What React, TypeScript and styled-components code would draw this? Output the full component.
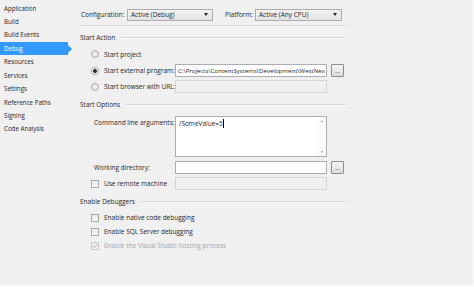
import React from "react";
import styled, { createGlobalStyle } from "styled-components";

const Global = createGlobalStyle`
  html, body { margin: 0; padding: 0; background: #f0f0f0; }
  body { font-family: "Open Sans", "Noto Sans", sans-serif; font-size: 6.5px; color: #1e1e1e; }
  * { box-sizing: border-box; }
`;

const Page = styled.div`
  width: 474px;
  height: 287px;
  display: flex;
  background: #f0f0f0;
  border-right: 1px solid #fafafa;
  border-bottom: 2px solid #fafafa;
  overflow: hidden;
`;

const Sidebar = styled.nav`
  width: 72px;
  flex: none;
  display: flex;
  flex-direction: column;
  padding-top: 1.5px;
  font-size: 6.2px;
`;

const NavItem = styled.div<{ $active?: boolean }>`
  position: relative;
  height: 13.45px;
  line-height: 13.45px;
  padding-left: 4px;
  width: 68px;
  color: ${(p) => (p.$active ? "#ffffff" : "#1e1e1e")};
  background: ${(p) => (p.$active ? "#3399ff" : "transparent")};
  &::after {
    content: "";
    display: ${(p) => (p.$active ? "block" : "none")};
    position: absolute;
    right: -4px;
    top: 2.7px;
    border-left: 4px solid #3399ff;
    border-top: 4px solid transparent;
    border-bottom: 4px solid transparent;
  }
`;

const Main = styled.div`
  flex: none;
  width: 266px;
  margin-left: 8px;
  display: flex;
  flex-direction: column;
`;

const ConfigRow = styled.div`
  display: flex;
  align-items: center;
  height: 22px;
  margin-top: 4px;
  padding-left: 1px;
  border-bottom: 1px solid #d5d5d5;
  box-shadow: 0 1px 0 #fafafa;
`;

const Label = styled.span<{ $w?: number }>`
  display: inline-block;
  width: ${(p) => (p.$w ? `${p.$w}px` : "auto")};
  white-space: nowrap;
`;

const Select = styled.div<{ $w: number }>`
  width: ${(p) => p.$w}px;
  height: 12px;
  border: 1px solid #acacac;
  background: linear-gradient(#f2f2f2, #e4e4e4);
  display: flex;
  align-items: center;
  justify-content: space-between;
  padding: 0 4px 0 3px;
  &::after {
    content: "";
    border-top: 3px solid #222;
    border-left: 2.5px solid transparent;
    border-right: 2.5px solid transparent;
  }
`;

const GroupHeader = styled.div<{ $mt: number }>`
  display: flex;
  align-items: center;
  gap: 6px;
  margin-top: ${(p) => p.$mt}px;
  height: 11px;
  &::after {
    content: "";
    flex: 1;
    height: 1px;
    background: #d5d5d5;
    box-shadow: 0 1px 0 #fafafa;
  }
`;

const Row = styled.div<{ $mt: number }>`
  display: grid;
  grid-template-columns: 84px 152px 17px;
  align-items: center;
  margin-left: 11px;
  margin-top: ${(p) => p.$mt}px;
  min-height: 12px;
`;

const CheckLabel = styled.label`
  display: flex;
  align-items: center;
  gap: 5px;
  white-space: nowrap;
`;

const Radio = styled.span<{ $on?: boolean }>`
  width: 8px;
  height: 8px;
  border-radius: 50%;
  border: 1px solid #a9a9a9;
  background: radial-gradient(circle, ${(p) => (p.$on ? "#333 0 1.6px, #e8e8e8 2px" : "#f4f4f4 0, #dcdcdc 100%")});
  flex: none;
`;

const Box = styled.span<{ $disabled?: boolean }>`
  width: 8px;
  height: 8px;
  border: 1px solid ${(p) => (p.$disabled ? "#c8c8c8" : "#a9a9a9")};
  background: linear-gradient(#ececec, #f6f6f6);
  flex: none;
  display: flex;
  align-items: center;
  justify-content: center;
  svg { display: block; }
`;

const Field = styled.div<{ $disabled?: boolean }>`
  height: 13px;
  border: 1px solid ${(p) => (p.$disabled ? "#d4d4d4" : "#abadb3")};
  background: ${(p) => (p.$disabled ? "#f0f0f0" : "#ffffff")};
  padding: 0 2px;
  line-height: 11px;
  white-space: nowrap;
  overflow: hidden;
  font-size: 6.1px;
`;

const Area = styled.div`
  position: relative;
  height: 41px;
  border: 1px solid #abadb3;
  background: #ffffff;
  padding: 2px 3px;
  align-self: start;
`;

const Scroll = styled.div`
  position: absolute;
  right: 0;
  top: 0;
  bottom: 0;
  width: 9px;
  display: flex;
  flex-direction: column;
  justify-content: space-between;
  align-items: center;
  padding: 3px 0;
  background: #fafafa;
  span {
    border-left: 1.5px solid transparent;
    border-right: 1.5px solid transparent;
  }
  span:first-child { border-bottom: 2px solid #999; }
  span:last-child { border-top: 2px solid #999; }
`;

const Caret = styled.span`
  border-right: 1px solid #000;
`;

const Browse = styled.div`
  justify-self: end;
  width: 13px;
  height: 13px;
  border: 1px solid #8c8c8c;
  border-radius: 1px;
  background: linear-gradient(#f4f4f4, #dcdcdc);
  display: flex;
  align-items: flex-end;
  justify-content: center;
  padding-bottom: 2px;
  font-size: 6px;
  line-height: 6px;
`;

const Indent = styled.div<{ $mt: number; $disabled?: boolean }>`
  margin-left: 11px;
  margin-top: ${(p) => p.$mt}px;
  color: ${(p) => (p.$disabled ? "#a6a6a6" : "inherit")};
`;

const Check = () => (
  <svg width="6" height="6" viewBox="0 0 6 6">
    <path d="M0.8 3 L2.4 4.6 L5.2 1.2" fill="none" stroke="#b0b0b0" strokeWidth="1" />
  </svg>
);

const nav = [
  "Application",
  "Build",
  "Build Events",
  "Debug",
  "Resources",
  "Services",
  "Settings",
  "Reference Paths",
  "Signing",
  "Code Analysis",
];

export default function App() {
  return (
    <>
      <Global />
      <Page>
        <Sidebar>
          {nav.map((n) => (
            <NavItem key={n} $active={n === "Debug"}>
              {n}
            </NavItem>
          ))}
        </Sidebar>
        <Main>
          <ConfigRow>
            <Label $w={46}>Configuration:</Label>
            <Select $w={86}>Active (Debug)</Select>
            <Label style={{ marginLeft: 12 }} $w={30}>Platform:</Label>
            <Select $w={87}>Active (Any CPU)</Select>
          </ConfigRow>
          <GroupHeader $mt={6}>Start Action</GroupHeader>
          <Row $mt={5}>
            <CheckLabel>
              <Radio />
              Start project
            </CheckLabel>
          </Row>
          <Row $mt={4}>
            <CheckLabel>
              <Radio $on />
              Start external program:
            </CheckLabel>
            <Field>C:\Projects\ContentSystems\Development\WestNex</Field>
            <Browse>...</Browse>
          </Row>
          <Row $mt={3}>
            <CheckLabel>
              <Radio />
              Start browser with URL:
            </CheckLabel>
            <Field $disabled />
          </Row>
          <GroupHeader $mt={6}>Start Options</GroupHeader>
          <Row $mt={6}>
            <Label style={{ alignSelf: "start", paddingTop: 2, paddingLeft: 3 }}>Command line arguments:</Label>
            <Area>
              /SomeValue=5<Caret />
              <Scroll>
                <span />
                <span />
              </Scroll>
            </Area>
          </Row>
          <Row $mt={4}>
            <Label style={{ paddingLeft: 3 }}>Working directory:</Label>
            <Field />
            <Browse>...</Browse>
          </Row>
          <Row $mt={3}>
            <CheckLabel>
              <Box />
              Use remote machine
            </CheckLabel>
            <Field $disabled />
          </Row>
          <GroupHeader $mt={6}>Enable Debuggers</GroupHeader>
          <Indent $mt={6}>
            <CheckLabel>
              <Box />
              Enable native code debugging
            </CheckLabel>
          </Indent>
          <Indent $mt={5}>
            <CheckLabel>
              <Box />
              Enable SQL Server debugging
            </CheckLabel>
          </Indent>
          <Indent $mt={5} $disabled>
            <CheckLabel>
              <Box $disabled>
                <Check />
              </Box>
              Enable the Visual Studio hosting process
            </CheckLabel>
          </Indent>
        </Main>
      </Page>
    </>
  );
}
